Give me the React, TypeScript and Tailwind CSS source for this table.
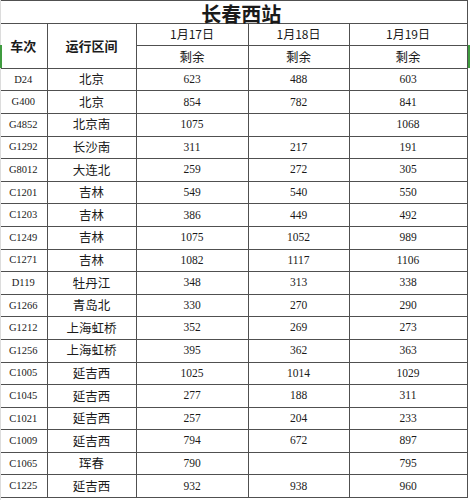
import React from "react";

type Row = {
  train: string;
  route: string;
  d17: string;
  d18: string;
  d19: string;
};

const rows: Row[] = [
  { train: "D24", route: "北京", d17: "623", d18: "488", d19: "603" },
  { train: "G400", route: "北京", d17: "854", d18: "782", d19: "841" },
  { train: "G4852", route: "北京南", d17: "1075", d18: "", d19: "1068" },
  { train: "G1292", route: "长沙南", d17: "311", d18: "217", d19: "191" },
  { train: "G8012", route: "大连北", d17: "259", d18: "272", d19: "305" },
  { train: "C1201", route: "吉林", d17: "549", d18: "540", d19: "550" },
  { train: "C1203", route: "吉林", d17: "386", d18: "449", d19: "492" },
  { train: "C1249", route: "吉林", d17: "1075", d18: "1052", d19: "989" },
  { train: "C1271", route: "吉林", d17: "1082", d18: "1117", d19: "1106" },
  { train: "D119", route: "牡丹江", d17: "348", d18: "313", d19: "338" },
  { train: "G1266", route: "青岛北", d17: "330", d18: "270", d19: "290" },
  { train: "G1212", route: "上海虹桥", d17: "352", d18: "269", d19: "273" },
  { train: "G1256", route: "上海虹桥", d17: "395", d18: "362", d19: "363" },
  { train: "C1005", route: "延吉西", d17: "1025", d18: "1014", d19: "1029" },
  { train: "C1045", route: "延吉西", d17: "277", d18: "188", d19: "311" },
  { train: "C1021", route: "延吉西", d17: "257", d18: "204", d19: "233" },
  { train: "C1009", route: "延吉西", d17: "794", d18: "672", d19: "897" },
  { train: "C1065", route: "珲春", d17: "790", d18: "", d19: "795" },
  { train: "C1225", route: "延吉西", d17: "932", d18: "938", d19: "960" },
];

// every cell gets a dark grid line; the first column drops its left edge
const cell = "border border-[#505050] h-[22.6px] p-0 text-center align-middle";
const first = "border-l-0";
const cjk = "font-['Noto_Sans_CJK_SC',sans-serif]";
const num = "font-['Liberation_Serif','Noto_Sans_CJK_SC',serif]";

const App = () => {
  return (
    <div className="relative w-[470px] h-[500px] bg-white text-[#1a1a1a] overflow-hidden">
      {/* faint sheet edge on the left */}
      <div className="absolute left-0 top-0 w-px h-[500px] bg-[#dcdcdc]" />
      {/* excel selection marks */}
      <div className="absolute left-0 top-[45px] w-[2px] h-[23px] bg-[#3f9b3f]" />
      <div className="absolute left-[468px] top-[45px] w-[2px] h-[23px] bg-[#3f9b3f]" />

      <table className="w-[467px] table-fixed border-collapse">
        <colgroup>
          <col className="w-[47px]" />
          <col className="w-[89px]" />
          <col className="w-[112px]" />
          <col className="w-[101px]" />
          <col className="w-[118px]" />
        </colgroup>
        <thead>
          <tr>
            <th
              colSpan={5}
              className={`${cell} ${first} pl-4 leading-none text-[20px] font-bold ${cjk}`}
            >
              <span className="relative top-[2px]">长春西站</span>
            </th>
          </tr>
          <tr>
            <th
              rowSpan={2}
              className={`${cell} ${first} text-[13px] font-bold ${cjk}`}
            >
              车次
            </th>
            <th rowSpan={2} className={`${cell} text-[13px] font-bold ${cjk}`}>
              运行区间
            </th>
            <th className={`${cell} text-[12px] font-normal ${cjk}`}>1月17日</th>
            <th className={`${cell} text-[12px] font-normal ${cjk}`}>1月18日</th>
            <th className={`${cell} text-[12px] font-normal ${cjk}`}>1月19日</th>
          </tr>
          <tr>
            <th className={`${cell} text-[12.5px] font-normal ${cjk}`}>剩余</th>
            <th className={`${cell} text-[12.5px] font-normal ${cjk}`}>剩余</th>
            <th className={`${cell} text-[12.5px] font-normal ${cjk}`}>剩余</th>
          </tr>
        </thead>
        <tbody>
          {rows.map((r) => (
            <tr key={r.train}>
              <td className={`${cell} ${first} text-[10.5px] ${num}`}>
                {r.train}
              </td>
              <td className={`${cell} text-[12.5px] ${cjk}`}>{r.route}</td>
              <td className={`${cell} text-[11.5px] ${num}`}>{r.d17}</td>
              <td className={`${cell} text-[11.5px] ${num}`}>{r.d18}</td>
              <td className={`${cell} text-[11.5px] ${num}`}>{r.d19}</td>
            </tr>
          ))}
        </tbody>
      </table>
    </div>
  );
};

export default App;
